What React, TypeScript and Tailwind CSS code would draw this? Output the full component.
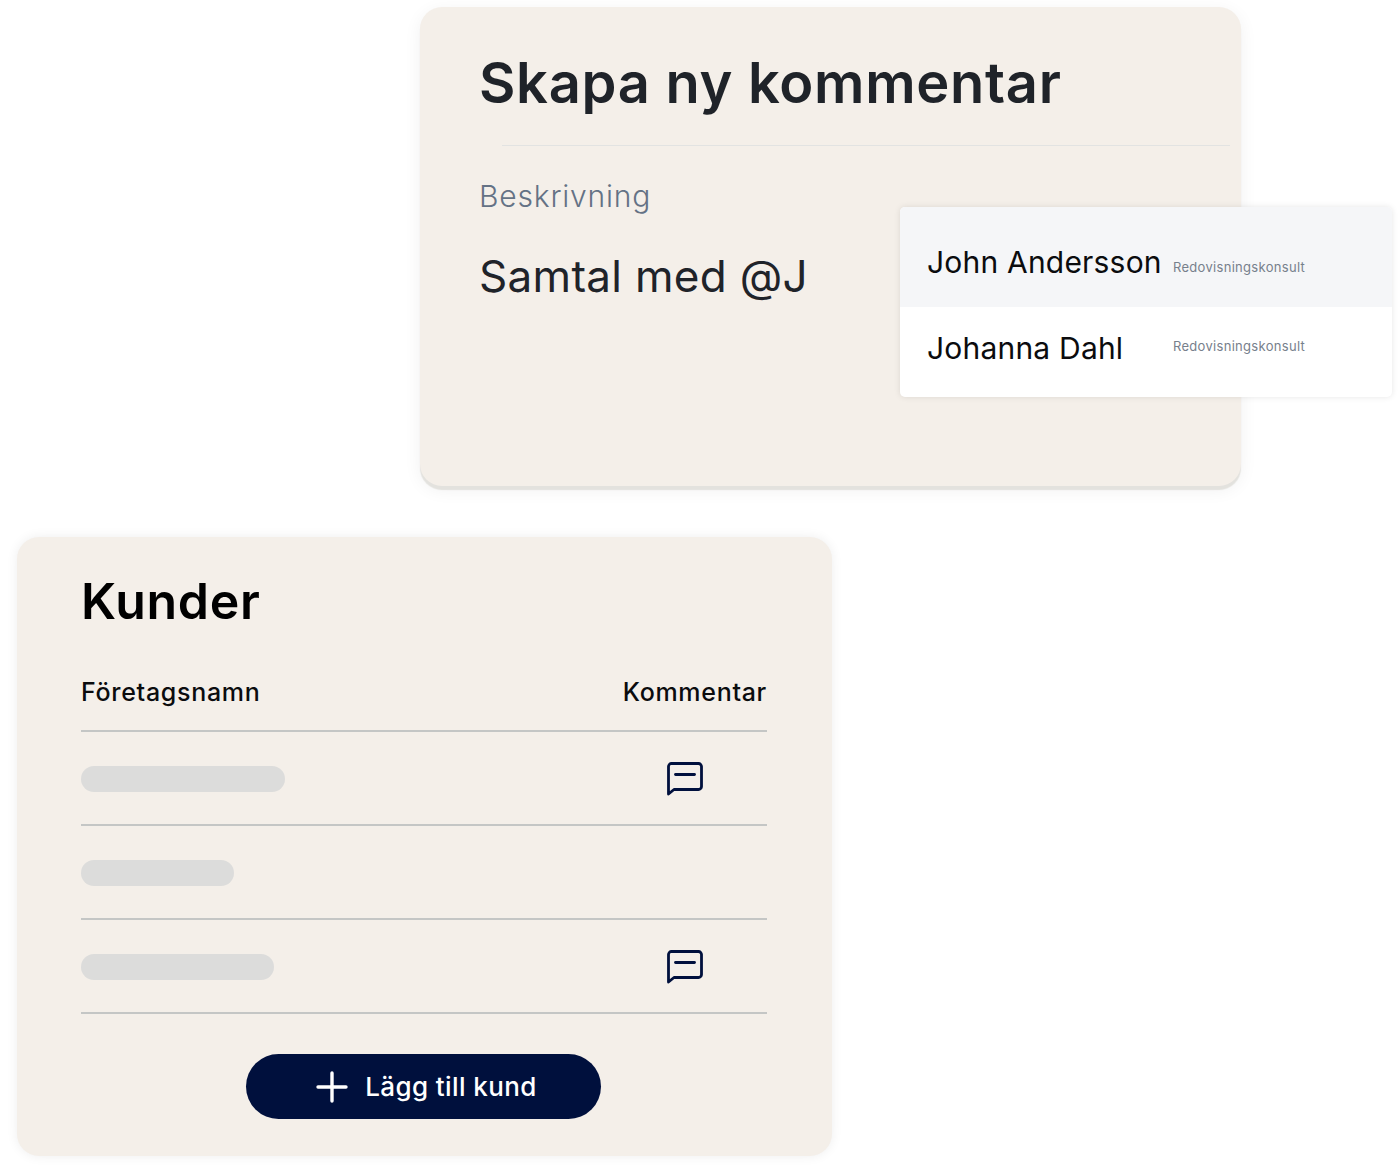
const font = "font-['Inter',sans-serif]";

function CommentIcon() {
  return (
    <svg width="37" height="37" viewBox="0 0 37 37" fill="none" stroke="#00103d" strokeWidth="2.8" strokeLinejoin="round" strokeLinecap="round">
      <path d="M2.5 33V5.5a3 3 0 0 1 3-3h27a3 3 0 0 1 3 3v20a3 3 0 0 1-3 3H8Z" />
      <path d="M9.5 13.5h19" />
    </svg>
  );
}

function CustomerRow({ barClass, hasComment }: { barClass: string; hasComment?: boolean }) {
  return (
    <div className="flex h-[94px] items-center justify-between border-b-2 border-[#c4c6c5] pt-[2px]">
      <div className={`h-[26px] rounded-full bg-[#dcdcdb] ${barClass}`} />
      {hasComment && (
        <div className="mr-[64px] flex w-[37px] items-center justify-center">
          <CommentIcon />
        </div>
      )}
    </div>
  );
}

function MentionRow({ name, active }: { name: string; active?: boolean }) {
  return (
    <div className={`flex items-center pl-[27px] ${active ? "h-[100px] bg-[#f5f6f8] pt-[8px]" : "h-[90px] pb-[10px]"}`}>
      <span className="w-[246px] pt-[2px] text-[30px] leading-[40px] tracking-[0.2px] text-[#0b0c0e]">{name}</span>
      <span className={`text-[13px] leading-[18px] tracking-[0.3px] text-[#77808c] ${active ? "pt-[12px]" : "pb-[2px]"}`}>
        Redovisningskonsult
      </span>
    </div>
  );
}

export default function App() {
  return (
    <div className={`h-[1172px] w-[1400px] overflow-hidden bg-white pt-[7px] ${font}`}>
      {/* Comment card */}
      <div className="relative ml-[420px] h-[479px] w-[821px] rounded-[22px] bg-[#f4efe9] pl-[59px] pt-[46px] shadow-[0_4px_1px_#e3e2de,0_4px_18px_rgba(0,0,0,0.06)]">
        <h1 className="text-[56px] font-semibold leading-[60px] tracking-[0.7px] text-[#1f2329]">Skapa ny kommentar</h1>
        <div className="ml-[23px] mr-[11px] mt-[32px] border-t border-[#e2e3e2]" />
        <p className="mt-[29px] text-[30px] font-light leading-[42px] tracking-[0.8px] text-[#647285]">Beskrivning</p>
        <p className="mt-[31px] text-[44px] leading-[56px] tracking-[0.3px] text-[#1f2329]">Samtal med @J</p>

        {/* Mention dropdown */}
        <div className="absolute left-[480px] top-[200px] w-[492px] overflow-hidden rounded-[5px] bg-white shadow-[0_0_6px_rgba(0,0,0,0.1)]">
          <MentionRow name="John Andersson" active />
          <MentionRow name="Johanna Dahl" />
        </div>
      </div>

      {/* Customers card */}
      <div className="ml-[17px] mt-[51px] h-[619px] w-[815px] rounded-[22px] bg-[#f4efe9] pl-[64px] pr-[65px] pt-[34px] shadow-[0_0_12px_rgba(0,0,0,0.07)]">
        <h2 className="text-[50px] font-semibold leading-[60px] tracking-[0.7px] text-black">Kunder</h2>
        <div className="mt-[39px] flex h-[44px] items-center justify-between text-[25px] font-medium leading-[36px] tracking-[0.7px] text-[#0b0c0e]">
          <span>Företagsnamn</span>
          <span>Kommentar</span>
        </div>
        <div className="mt-[16px] border-t-2 border-[#c4c6c5]">
          <CustomerRow barClass="w-[204px]" hasComment />
          <CustomerRow barClass="w-[153px]" />
          <CustomerRow barClass="w-[193px]" hasComment />
        </div>
        <div className="mt-[40px] flex justify-center pr-[1px]">
          <button className="flex h-[65px] w-[355px] items-center justify-center gap-[17px] rounded-full bg-[#00103d] pl-[6px] text-[26px] font-medium tracking-[0.4px] text-white">
            <svg width="32" height="32" viewBox="0 0 32 32" fill="none" stroke="#fff" strokeWidth="3.4" strokeLinecap="round">
              <path d="M16 2v28M2 16h28" />
            </svg>
            Lägg till kund
          </button>
        </div>
      </div>
    </div>
  );
}
